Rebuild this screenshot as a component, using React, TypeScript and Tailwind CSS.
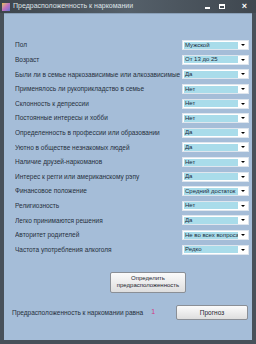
import React from "react";

const rows: [string, string][] = [
  ["Пол", "Мужской"],
  ["Возраст", "От 13 до 25"],
  ["Были ли в семье наркозависимые или алкозависимые", "Да"],
  ["Применялось ли рукоприкладство в семье", "Нет"],
  ["Склонность к депрессии", "Нет"],
  ["Постоянные интересы и хобби", "Нет"],
  ["Определенность в профессии или образовании", "Да"],
  ["Уютно в обществе незнакомых людей", "Да"],
  ["Наличие друзей-наркоманов", "Нет"],
  ["Интерес к регги или американскому рэпу", "Да"],
  ["Финансовое положение", "Средний достаток"],
  ["Религиозность", "Нет"],
  ["Легко принимаются решения", "Да"],
  ["Авторитет родителей", "Не во всех вопросах"],
  ["Частота употребления алкоголя", "Редко"],
];

const Combo = ({ value }: { value: string }) => (
  <div className="w-[67px] h-[10px] bg-white border border-[#dfe6ee] flex items-center">
    <div className="flex-1 min-w-0 h-[7px] ml-[1px] bg-[#a9dcea] overflow-hidden whitespace-nowrap leading-[7px] text-[6px] text-[#1a2a3a] pl-[1px]">
      {value}
    </div>
    <div className="w-[10px] flex items-center justify-center">
      <div className="w-0 h-0 border-l-[2px] border-r-[2px] border-t-[2px] border-l-transparent border-r-transparent border-t-black" />
    </div>
  </div>
);

const App = () => {
  return (
    <div
      className="w-[256px] h-[344px] bg-[#48515a] flex flex-col overflow-hidden"
      style={{ fontFamily: '"Liberation Sans", Arial, sans-serif' }}
    >
      <div className="h-[13px] flex items-center pl-[2px] bg-gradient-to-r from-[#3d454c] via-[#55606a] to-[#3f474f]">
        <div className="w-[8px] h-[8px] mr-[3px] bg-gradient-to-br from-[#e8c040] via-[#c070c0] to-[#6070d0]" />
        <span className="text-[7px] text-[#dfe4e8] whitespace-nowrap">Предрасположенность к наркомании</span>
        <div className="ml-auto flex items-center gap-[9px] pr-[9px] text-white">
          <div className="w-[5px] h-[2px] bg-white mt-[3px]" />
          <div className="w-[6px] h-[5px] border border-white border-t-2" />
          <span className="text-[9px] font-bold leading-none ml-[8px]">×</span>
        </div>
      </div>
      <div className="flex-1 mx-[4px] mb-[4px] bg-[#a5bdd8] border-t border-[#8aa0b8] flex flex-col">
        <div className="pt-[24px] pl-[11px] pr-[3px] flex flex-col">
          {rows.map(([label, value]) => (
            <div key={label} className="h-[14.6px] flex items-center">
              <span className="flex-1 text-[6.5px] text-[#26303c] whitespace-nowrap overflow-hidden">{label}</span>
              <Combo value={value} />
            </div>
          ))}
        </div>
        <div className="flex justify-center pl-[40px] mt-[15px]">
          <div className="w-[76px] h-[21px] bg-gradient-to-b from-[#fbfbfb] to-[#dedede] border border-[#8a8f96] rounded-[2px] flex flex-col items-center justify-center text-[6px] leading-[7px] text-[#1c2430]">
            <span>Определить</span>
            <span>предрасположенность</span>
          </div>
        </div>
        <div className="flex items-center mt-[12px] pl-[8px] pr-[4px]">
          <span className="text-[6.5px] text-[#26303c] whitespace-nowrap">Предрасположенность к наркомании равна</span>
          <span className="text-[7px] text-[#d03c84] ml-[8px]">1</span>
          <div className="ml-auto w-[72px] h-[15px] bg-gradient-to-b from-[#fbfbfb] to-[#dedede] border border-[#8a8f96] rounded-[2px] flex items-center justify-center text-[6.5px] text-[#1c2430]">
            Прогноз
          </div>
        </div>
      </div>
    </div>
  );
};

export default App;
